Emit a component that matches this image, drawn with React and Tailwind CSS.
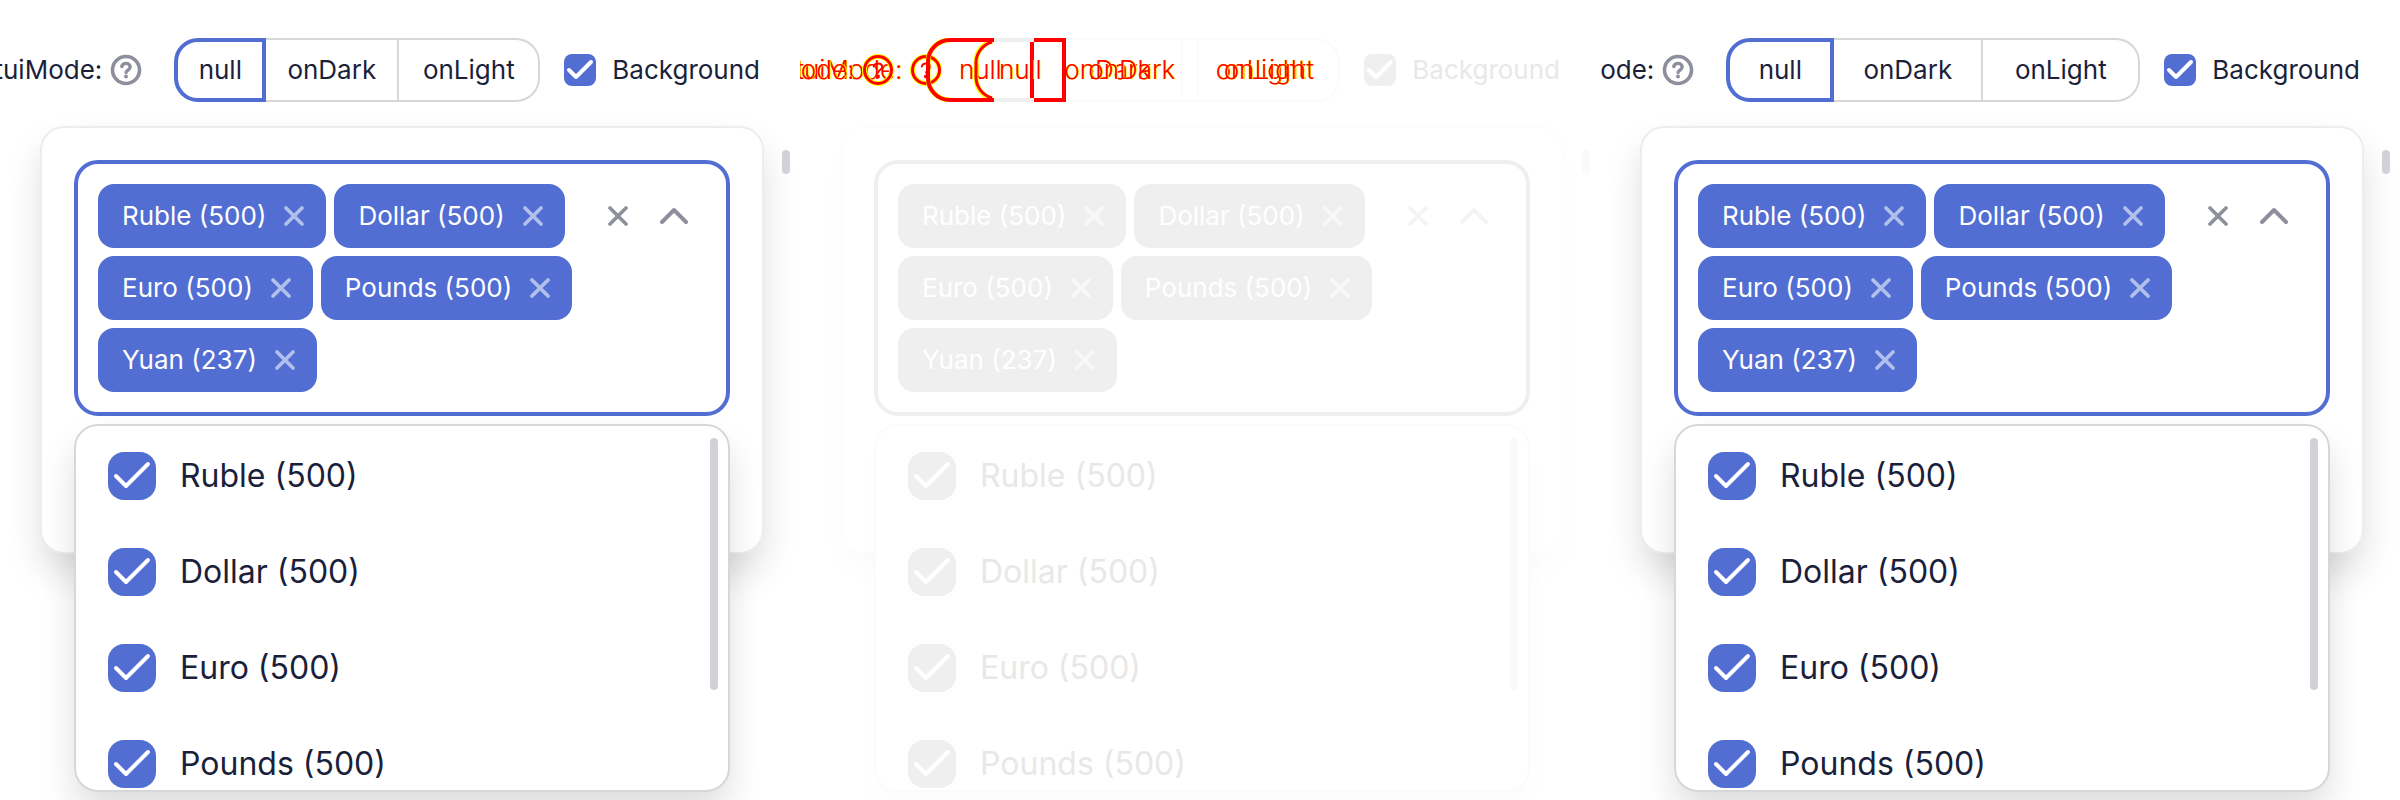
import React from "react";

const CURRENCIES = [
  { name: "Ruble", amount: 500 },
  { name: "Dollar", amount: 500 },
  { name: "Euro", amount: 500 },
  { name: "Pounds", amount: 500 },
  { name: "Yuan", amount: 237 },
];

const MODES = [
  { name: "null", regular: "w-23", wide: "w-27" },
  { name: "onDark", regular: "w-[133px]", wide: "w-[149px]" },
  { name: "onLight", regular: "w-[141px]", wide: "w-[157px]" },
];

const NORMAL = {
  text: "text-[#1b1f3b]",
  modeText: "text-[#1b1f3b]",
  accentBg: "bg-[#526ed3]",
  accentBorder: "border-[#526ed3]",
  activeMode: "border-4 border-[#526ed3]",
  line: "border-[#d7d7d7]",
  cardLine: "border-[#ededed]",
  chipCross: "text-[#b4c0ec]",
  icon: "text-[#8d8f9d]",
  help: "text-[#8d8f9d]",
  thumb: "bg-[#d1d2d8]",
  cardShadow: "shadow-[0_20px_36px_-2px_rgba(0,0,0,0.14)]",
  menuShadow: "shadow-[0_20px_36px_-2px_rgba(0,0,0,0.14)]",
};

const FADED = {
  text: "text-[#e8e8e8]",
  modeText: "font-light text-[#ff0000] [text-shadow:1px_0_0_#ffff00]",
  accentBg: "bg-[#efefef]",
  accentBorder: "border-[#efefef]",
  activeMode: "border-4 border-transparent",
  line: "border-[#fbfbfb]",
  cardLine: "border-[#fdfdfd]",
  chipCross: "text-[#f8f8f8]",
  icon: "text-[#f4f4f4]",
  help: "text-[#ff0000]",
  thumb: "bg-[#fafafa]",
  cardShadow: "shadow-[0_20px_36px_-2px_rgba(0,0,0,0.014)]",
  menuShadow: "shadow-[0_20px_36px_-2px_rgba(0,0,0,0.014)]",
};

function Cross() {
  return (
    <svg className="size-5" viewBox="0 0 20 20" fill="none" stroke="currentColor" strokeWidth="3.6" strokeLinecap="round">
      <path d="M2 2 18 18M18 2 2 18" />
    </svg>
  );
}

function HelpIcon({ outlined }) {
  return (
    <svg className="size-8" viewBox="0 0 32 32" fill="none" strokeLinecap="round">
      {outlined && <circle cx="16" cy="16" r="13.5" stroke="#ffff00" strokeWidth="5" />}
      <circle cx="16" cy="16" r="13.5" stroke="currentColor" strokeWidth={outlined ? 3 : 3.6} />
      <path
        d="M11.8 12.6C12.2 10.5 13.8 9.4 16 9.4c2.5 0 4.2 1.5 4.2 3.6 0 2.9-4.1 3.1-4.1 5.5"
        stroke="currentColor"
        strokeWidth={outlined ? 2 : 3.4}
      />
      <circle cx="16" cy="22.6" r="2" fill="currentColor" />
    </svg>
  );
}

function Checkbox({ id, theme, large }) {
  return (
    <span className={`grid shrink-0 ${large ? "size-12" : "size-8"}`}>
      <input
        id={id}
        type="checkbox"
        defaultChecked
        className={`col-start-1 row-start-1 size-full appearance-none ${large ? "rounded-2xl" : "rounded-lg"} ${theme.accentBg}`}
      />
      {large ? (
        <svg className="pointer-events-none col-start-1 row-start-1 size-full" viewBox="0 0 48 48" fill="none" stroke="#fff" strokeWidth="4" strokeLinecap="round" strokeLinejoin="round">
          <path d="M8 24 18 34 40 12" />
        </svg>
      ) : (
        <svg className="pointer-events-none col-start-1 row-start-1 size-full" viewBox="0 0 32 32" fill="none" stroke="#fff" strokeWidth="4" strokeLinecap="round" strokeLinejoin="round">
          <path d="M5 16 12 23 27 8" />
        </svg>
      )}
    </span>
  );
}

function ModeControls({ theme, wide, faded, outline }) {
  return (
    <div className="flex items-center">
      <span className={`mr-2 ${theme.modeText}`}>tuiMode:</span>
      <button type="button" aria-label="Help" className={`mr-8 ${theme.help}`}>
        <HelpIcon outlined={faded} />
      </button>
      <div className="relative flex h-16">
        {outline}
        {MODES.map((mode, i) => (
          <button
            key={mode.name}
            type="button"
            className={`flex items-center justify-center ${theme.modeText} ${wide ? mode.wide : mode.regular} ${
              i === 0 ? `rounded-l-3xl ${theme.activeMode}` : `border-y-2 border-r-2 ${theme.line}`
            } ${i === 2 ? "rounded-r-3xl" : ""}`}
          >
            {mode.name}
          </button>
        ))}
      </div>
    </div>
  );
}

function DiffOutline() {
  return (
    <svg className="absolute top-0 left-0 h-16 w-35" viewBox="0 0 140 64" fill="none">
      <path d="M68 2H106V62H68" stroke="#efefef" strokeWidth="4" />
      <g stroke="#ffff00" strokeWidth="5">
        <path d="M24 2A22 22 0 0 0 2 24V40A22 22 0 0 0 24 62" />
        <path d="M66 3A22 22 0 0 0 50 24V40A22 22 0 0 0 66 61" />
      </g>
      <g stroke="#ff0000">
        <path d="M68 2H24A22 22 0 0 0 2 24V40A22 22 0 0 0 24 62H68" strokeWidth="4" />
        <path d="M66 4A22 22 0 0 0 50 24V40A22 22 0 0 0 66 60" strokeWidth="3" />
        <path d="M106 4V60M108 2H138V62H108" strokeWidth="4" />
      </g>
    </svg>
  );
}

function Toolbar({ id, theme, wide, faded }) {
  return (
    <div className="flex items-center justify-end overflow-hidden pt-[38px] pr-10 pb-6 whitespace-nowrap">
      <div className="relative mr-6 shrink-0">
        {faded && (
          <div className="absolute top-0 right-0" aria-hidden="true">
            <ModeControls theme={theme} wide faded outline={<DiffOutline />} />
          </div>
        )}
        <ModeControls theme={theme} wide={wide} faded={faded} />
      </div>
      <label htmlFor={`${id}-background`} className={`flex items-center gap-4 ${theme.text}`}>
        <Checkbox id={`${id}-background`} theme={theme} />
        Background
      </label>
    </div>
  );
}

function MultiSelect({ id, theme }) {
  return (
    <div className="relative">
      <div className={`flex items-start rounded-3xl border-4 bg-white p-5 ${theme.accentBorder}`}>
        <div className="flex min-w-0 flex-1 flex-wrap gap-2">
          {CURRENCIES.map(({ name, amount }) => (
            <span key={name} className={`flex h-16 items-center rounded-2xl pr-[22px] pl-6 text-white ${theme.accentBg}`}>
              {name} ({amount})
              <button type="button" aria-label={`Remove ${name}`} className={`ml-[18px] ${theme.chipCross}`}>
                <Cross />
              </button>
            </span>
          ))}
          <input
            type="text"
            role="combobox"
            aria-expanded="true"
            aria-controls={`${id}-options`}
            aria-label="Currencies"
            className="h-16 w-20 min-w-0 flex-1 outline-none"
          />
        </div>
        <div className={`flex h-16 shrink-0 items-center gap-8 pr-[18px] pl-4 ${theme.icon}`}>
          <button type="button" aria-label="Clear">
            <Cross />
          </button>
          <button type="button" aria-label="Close list">
            <svg className="h-5 w-7" viewBox="0 0 28 20" fill="none" stroke="currentColor" strokeWidth="4" strokeLinecap="round" strokeLinejoin="round">
              <path d="M2 16 14 4 26 16" />
            </svg>
          </button>
        </div>
      </div>
      <div className={`absolute inset-x-0 top-full z-10 mt-2 flex h-[368px] overflow-hidden rounded-3xl border-2 bg-white ${theme.line} ${theme.menuShadow}`}>
        <ul id={`${id}-options`} className={`flex-1 pt-[2px] text-[32px] leading-10 ${theme.text}`}>
          {CURRENCIES.map(({ name, amount }) => (
            <li key={name}>
              <label htmlFor={`${id}-${name}`} className="flex h-24 items-center gap-6 px-8">
                <Checkbox id={`${id}-${name}`} theme={theme} large />
                {name} ({amount})
              </label>
            </li>
          ))}
        </ul>
        <div className={`mt-3 mr-[10px] h-[252px] w-2 rounded-full ${theme.thumb}`} />
      </div>
    </div>
  );
}

function Panel({ id, theme, wide, faded }) {
  return (
    <section className="min-w-0 flex-1 overflow-hidden">
      <Toolbar id={id} theme={theme} wide={wide} faded={faded} />
      <div className="flex pl-10">
        <div className={`min-w-0 flex-1 rounded-3xl border-2 bg-white px-8 pt-8 pb-[136px] ${theme.cardLine} ${theme.cardShadow}`}>
          <MultiSelect id={id} theme={theme} />
        </div>
        <div className="w-9 pt-6 pl-[18px]">
          <div className={`h-6 w-2 rounded-full ${theme.thumb}`} />
        </div>
      </div>
    </section>
  );
}

export default function App() {
  return (
    <main className="flex h-screen overflow-hidden bg-white font-[Inter,sans-serif] text-[26px] leading-8">
      <Panel id="before" theme={NORMAL} />
      <Panel id="diff" theme={FADED} faded />
      <Panel id="after" theme={NORMAL} wide />
    </main>
  );
}
